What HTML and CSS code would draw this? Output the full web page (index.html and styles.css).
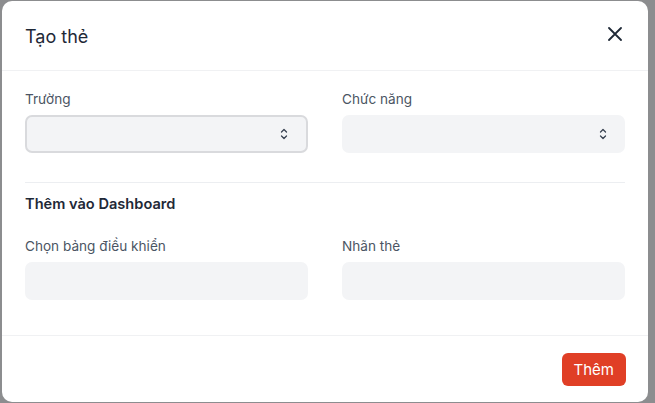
FILE: index.html
```html
<!DOCTYPE html>
<html lang="vi">
<head>
<meta charset="utf-8">
<link rel="stylesheet" href="styles.css">
</head>
<body>
<div class="backdrop">
  <div class="modal">
    <div class="modal-header">
      <h2 class="title">Tạo thẻ</h2>
      <button class="close" aria-label="close">
        <svg width="14" height="14" viewBox="0 0 14 14"><path d="M1 1L13 13M13 1L1 13" stroke="#1f2937" stroke-width="1.8" stroke-linecap="round"/></svg>
      </button>
    </div>
    <div class="modal-body">
      <div class="grid">
        <div class="field">
          <label class="label">Trường</label>
          <div class="select focused">
            <svg class="chev" width="8" height="12" viewBox="0 0 8 12"><path d="M1.5 4L4 1.5L6.5 4M1.5 8L4 10.5L6.5 8" fill="none" stroke="#374151" stroke-width="1.3" stroke-linecap="round" stroke-linejoin="round"/></svg>
          </div>
        </div>
        <div class="field">
          <label class="label">Chức năng</label>
          <div class="select">
            <svg class="chev" width="8" height="12" viewBox="0 0 8 12"><path d="M1.5 4L4 1.5L6.5 4M1.5 8L4 10.5L6.5 8" fill="none" stroke="#374151" stroke-width="1.3" stroke-linecap="round" stroke-linejoin="round"/></svg>
          </div>
        </div>
      </div>
      <hr class="sep">
      <h3 class="section">Thêm vào Dashboard</h3>
      <div class="grid">
        <div class="field">
          <label class="label">Chọn bảng điều khiển</label>
          <div class="input"></div>
        </div>
        <div class="field">
          <label class="label">Nhãn thẻ</label>
          <div class="input"></div>
        </div>
      </div>
    </div>
    <div class="modal-footer">
      <button class="primary">Thêm</button>
    </div>
  </div>
</div>
</body>
</html>
```
FILE: styles.css
```css
* { box-sizing: border-box; }
html, body { margin: 0; padding: 0; }
body {
  width: 655px;
  height: 403px;
  overflow: hidden;
  background: #8c8d8f;
  font-family: Inter, "Noto Sans", "Liberation Sans", sans-serif;
}
.backdrop {
  padding: 1px 0 0 2px;
}
.modal {
  width: 646px;
  height: 401px;
  background: #ffffff;
  border-radius: 10px;
  display: flex;
  flex-direction: column;
}
.modal-header {
  height: 70px;
  display: flex;
  align-items: center;
  justify-content: space-between;
  padding: 0 26px 0 23px;
  border-bottom: 1px solid #f0f1f3;
}
.title {
  margin: 0;
  margin-top: 2px;
  font-size: 18px;
  font-weight: 400;
  color: #1f2937;
}
.close {
  border: 0;
  background: none;
  padding: 0;
  width: 14px;
  height: 14px;
  margin-top: -4px;
  display: flex;
}
.modal-body {
  padding: 18px 23px 0 23px;
  height: 265px;
  border-bottom: 1px solid #f0f1f3;
}
.grid {
  display: grid;
  grid-template-columns: 283px 283px;
  column-gap: 34px;
}
.field {
  display: flex;
  flex-direction: column;
}
.label {
  font-size: 13.6px;
  color: #4b5563;
  line-height: 20px;
  margin-bottom: 6px;
}
.select, .input {
  height: 38px;
  background: #f3f4f6;
  border-radius: 7px;
}
.select {
  display: flex;
  align-items: center;
  justify-content: flex-end;
  padding-right: 18px;
}
.select.focused {
  border: 2px solid #d9dadd;
}
.sep {
  border: 0;
  border-top: 1px solid #eceef1;
  margin: 29px 0 0 0;
}
.section {
  margin: 11px 0 22px 0;
  font-size: 14.6px;
  font-weight: 600;
  color: #1f2937;
  line-height: 20px;
}
.modal-footer {
  flex: 1;
  display: flex;
  justify-content: flex-end;
  align-items: flex-start;
  padding: 17px 22px 0 0;
}
.primary {
  height: 33px;
  padding: 0 12px;
  border: 0;
  border-radius: 6px;
  background: #e03f26;
  color: #ffffff;
  font-family: inherit;
  font-size: 15px;
}
```
